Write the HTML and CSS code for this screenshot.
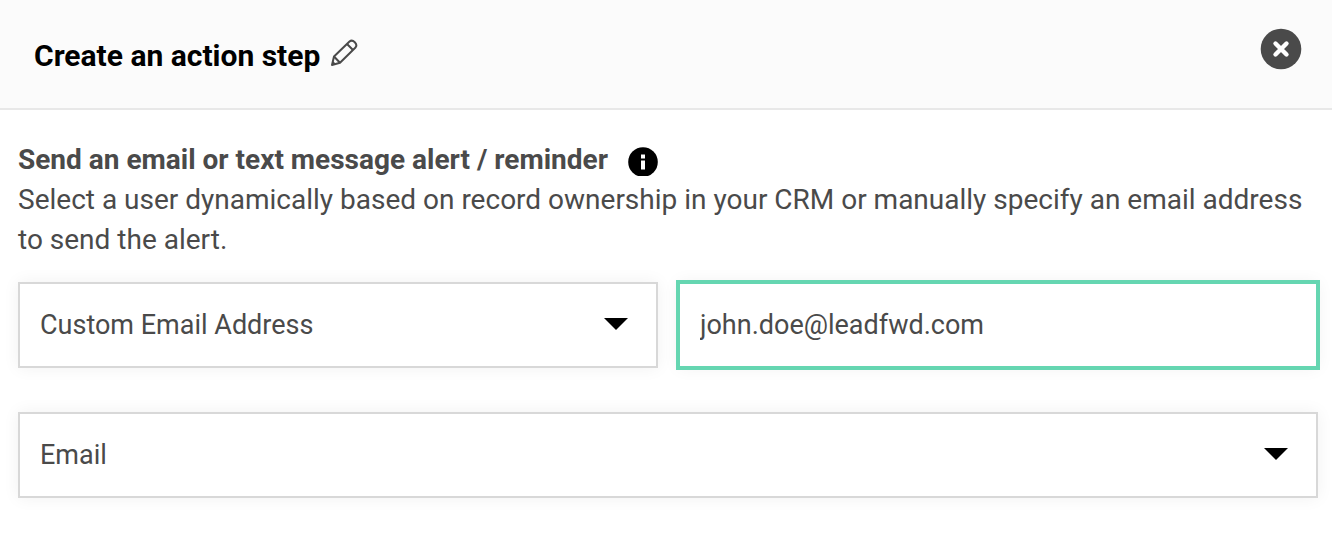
FILE: index.html
```
<!DOCTYPE html>
<html lang="en">
<head>
  <meta charset="UTF-8">
  <meta name="viewport" content="width=device-width, initial-scale=1.0">
  <title>Create an action step</title>
  <link rel="stylesheet" href="styles.css">
</head>
<body>
  <header class="modal-header">
    <div class="title">
      <h1>Create an action step</h1>
      <button type="button" class="icon-btn edit-btn" aria-label="Edit name">
        <svg width="28" height="28" viewBox="0 0 28 28" fill="none" stroke="#4a4a4a" stroke-width="2" stroke-linejoin="round">
          <path d="M2 26 L4 17.5 L19.5 2.5 Q22 0.5 24.8 3.2 Q27.5 6 25.5 8.5 L10 23.8 Z"/>
          <path d="M17 5 L23 11 M4 17.5 L10 23.8"/>
          <path d="M2 26 L3 22 L6 25 Z" fill="#4a4a4a" stroke="none"/>
        </svg>
      </button>
    </div>
    <button type="button" class="icon-btn" aria-label="Close">
      <svg width="42" height="42" viewBox="0 0 42 42">
        <circle cx="21" cy="21" r="20.3" fill="#4a4a4a"/>
        <path d="M15.5 15.5 L26.5 26.5 M26.5 15.5 L15.5 26.5" stroke="#fff" stroke-width="4.4" stroke-linecap="round"/>
      </svg>
    </button>
  </header>

  <main class="modal-body">
    <div class="section-title">
      <h2>Send an email or text message alert / reminder</h2>
      <svg width="30" height="29" viewBox="0 0 30 29" role="img" aria-label="Info">
        <circle cx="15" cy="15" r="14.8" fill="#000"/>
        <path d="M13 7.5h4v4h-4z M13 13.5h4v9h-4z" fill="#fff"/>
      </svg>
    </div>
    <p>Select a user dynamically based on record ownership in your CRM or manually specify an email address to send the alert.</p>

    <form class="fields">
      <div class="select">
        <select aria-label="Recipient">
          <option>Custom Email Address</option>
        </select>
      </div>
      <input class="active" type="text" value="john.doe@leadfwd.com" aria-label="Email address">
      <div class="select wide">
        <select aria-label="Alert type">
          <option>Email</option>
        </select>
      </div>
    </form>
  </main>
</body>
</html>
```
FILE: styles.css
```
:root {
  --text: #4a4a4a;
  --border: #d8d8d8;
  --accent: #65d6b1;
}

* {
  margin: 0;
  padding: 0;
  box-sizing: border-box;
  font-family: "Proxima Nova", Roboto, sans-serif;
}

body {
  background-color: #fff;
  color: var(--text);
  font-size: 28px;
  line-height: 40px;
}

.modal-header {
  display: flex;
  justify-content: space-between;
  align-items: flex-start;
  padding: 28px 30px 32px 34px;
  background-color: #fbfbfb;
  border-bottom: 2px solid #e8e8e8;
}

.title {
  display: flex;
  align-items: flex-start;
  gap: 10px;
  padding-top: 8px;
}

h1 {
  color: #000;
  font-size: 30px;
  font-weight: 700;
  line-height: 40px;
}

.icon-btn {
  display: block;
  border: none;
  background: none;
  cursor: pointer;
}

.edit-btn {
  padding-top: 3px;
}

.icon-btn svg,
.section-title svg {
  display: block;
}

.modal-body {
  padding: 30px 14px 50px 18px;
}

.section-title {
  display: flex;
  align-items: center;
  gap: 20px;
}

.section-title svg {
  margin-top: 3px;
}

h2 {
  font-size: 28px;
  font-weight: 700;
}

.fields {
  display: grid;
  grid-template-columns: 1fr 1fr;
  gap: 44px 20px;
  margin-top: 22px;
}

.select {
  position: relative;
}

.select::after {
  content: "";
  position: absolute;
  top: 36px;
  right: 30px;
  border: 12px solid transparent;
  border-top-color: #000;
  border-bottom: none;
  pointer-events: none;
}

.wide {
  grid-column: 1 / -1;
}

select,
input {
  display: block;
  width: 100%;
  height: 86px;
  padding: 0 20px;
  border: 2px solid var(--border);
  border-radius: 0;
  background-color: #fff;
  box-shadow: 0 0 16px rgba(0, 0, 0, 0.06);
  color: var(--text);
  font-size: 27px;
  appearance: none;
  outline: none;
}

.active {
  border-color: var(--accent);
  box-shadow: 0 0 0 2px var(--accent), 0 0 16px rgba(0, 0, 0, 0.06);
}
```
